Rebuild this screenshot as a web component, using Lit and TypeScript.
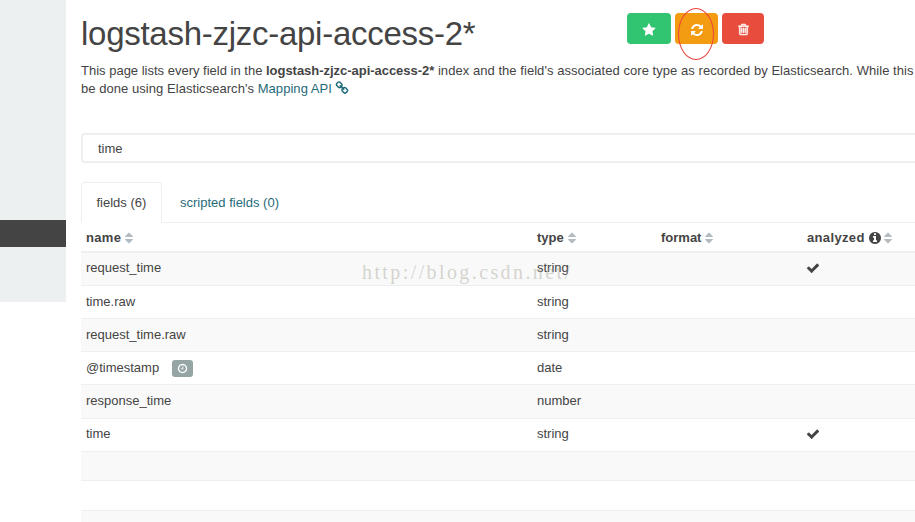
import { LitElement, html, css, svg, nothing } from "lit";
import { customElement, property } from "lit/decorators.js";

const ICONS: Record<string, string> = {
  star: "M1728 647q0 22-26 48l-363 354 86 500q1 7 1 20 0 21-10.5 35.5t-30.5 14.5q-19 0-40-12l-449-236-449 236q-22 12-40 12-21 0-31.5-14.5t-10.5-35.5q0-6 2-20l86-500-364-354q-25-27-25-48 0-37 56-46l502-73 225-455q19-41 49-41t49 41l225 455 502 73q56 9 56 46z",
  refresh: "M1639 1056q0 5-1 7-64 268-268 434.5t-478 166.5q-146 0-282.5-55t-243.5-157l-129 129q-19 19-45 19t-45-19-19-45v-448q0-26 19-45t45-19h448q26 0 45 19t19 45-19 45l-137 137q71 66 161 102t187 36q134 0 250-65t186-179q11-17 53-117 8-23 30-23h192q13 0 22.5 9.5t9.5 22.5zm25-800v448q0 26-19 45t-45 19h-448q-26 0-45-19t-19-45 19-45l138-138q-148-137-349-137-134 0-250 65t-186 179q-11 17-53 117-8 23-30 23h-199q-13 0-22.5-9.5t-9.5-22.5v-7q65-268 270-434.5t480-166.5q146 0 284 55.5t245 156.5l130-129q19-19 45-19t45 19 19 45z",
  trash: "M704 736v576q0 14-9 23t-23 9h-64q-14 0-23-9t-9-23v-576q0-14 9-23t23-9h64q14 0 23 9t9 23zm256 0v576q0 14-9 23t-23 9h-64q-14 0-23-9t-9-23v-576q0-14 9-23t23-9h64q14 0 23 9t9 23zm256 0v576q0 14-9 23t-23 9h-64q-14 0-23-9t-9-23v-576q0-14 9-23t23-9h64q14 0 23 9t9 23zm128 724v-948h-896v948q0 22 7 40.5t14.5 27 10.5 8.5h832q3 0 10.5-8.5t14.5-27 7-40.5zm-672-1076h448l-48-117q-7-9-17-11h-317q-10 2-17 11zm928 32v64q0 14-9 23t-23 9h-96v948q0 83-47 143.5t-113 60.5h-832q-66 0-113-58.5t-47-141.5v-952h-96q-14 0-23-9t-9-23v-64q0-14 9-23t23-9h309l70-167q15-37 54-63t79-26h320q40 0 79 26t54 63l70 167h309q14 0 23 9t9 23z",
  check: "M1671 566q0 40-28 68l-724 724-136 136q-28 28-68 28t-68-28l-136-136-362-362q-28-28-28-68t28-68l136-136q28-28 68-28t68 28l294 295 656-657q28-28 68-28t68 28l136 136q28 28 28 68z",
  info: "M1152 1376v-160q0-14-9-23t-23-9h-96v-512q0-14-9-23t-23-9h-320q-14 0-23 9t-9 23v160q0 14 9 23t23 9h96v320h-96q-14 0-23 9t-9 23v160q0 14 9 23t23 9h448q14 0 23-9t9-23zm-128-896v-160q0-14-9-23t-23-9h-192q-14 0-23 9t-9 23v160q0 14 9 23t23 9h192q14 0 23-9t9-23zm640 416q0 209-103 385.5t-279.5 279.5-385.5 103-385.5-103-279.5-279.5-103-385.5 103-385.5 279.5-279.5 385.5-103 385.5 103 279.5 279.5 103 385.5z",
  clock: "M1024 544v448q0 14-9 23t-23 9h-320q-14 0-23-9t-9-23v-64q0-14 9-23t23-9h224v-352q0-14 9-23t23-9h64q14 0 23 9t9 23zm416 352q0-148-73-273t-198-198-273-73-273 73-198 198-73 273 73 273 198 198 273 73 273-73 198-198 73-273zm224 0q0 209-103 385.5t-279.5 279.5-385.5 103-385.5-103-279.5-279.5-103-385.5 103-385.5 279.5-279.5 385.5-103 385.5 103 279.5 279.5 103 385.5z",
  chain: "M1520 1216q0-40-28-68l-208-208q-28-28-68-28-42 0-72 32 3 3 19 18.5t21.5 21.5 15 19 13 25.5 3.5 27.5q0 40-28 68t-68 28q-15 0-27.5-3.5t-25.5-13-19-15-21.5-21.5-18.5-19q-33 31-33 73 0 40 28 68l206 207q27 27 68 27 40 0 68-26l147-146q28-28 28-67zm-703-705q0-40-28-68l-206-207q-28-28-68-28-39 0-68 27l-147 146q-28 28-28 67 0 40 28 68l208 208q27 27 68 27 42 0 72-31-3-3-19-18.5t-21.5-21.5-15-19-13-25.5-3.5-27.5q0-40 28-68t68-28q15 0 27.5 3.5t25.5 13 19 15 21.5 21.5 18.5 19q33-31 33-73zm895 705q0 120-85 203l-147 146q-83 83-203 83-121 0-204-85l-206-207q-83-83-83-203 0-123 88-209l-88-88q-86 88-208 88-120 0-204-84l-208-208q-84-84-84-204t85-203l147-146q83-83 203-83 121 0 204 85l206 207q83 83 83 203 0 123-88 209l88 88q86-88 208-88 120 0 204 84l208 208q84 84 84 204z",
  sort: "M1408 1088q0 26-19 45l-448 448q-19 19-45 19t-45-19l-448-448q-19-19-19-45t19-45 45-19h896q26 0 45 19t19 45zm0-384q0 26-19 45t-45 19h-896q-26 0-45-19t-19-45 19-45l448-448q19-19 45-19t45 19l448 448q19 19 19 45z",
};

@customElement("fa-icon")
class FaIcon extends LitElement {
  @property() name = "";
  static styles = css`
    :host { display: inline-block; width: 14px; height: 14px; flex: none; }
    svg { display: block; width: 100%; height: 100%; fill: currentColor; overflow: visible; }
    .trash { stroke: currentColor; stroke-width: 70; }
  `;
  render() {
    return html`<svg viewBox="0 0 1792 1792">${svg`<path class=${this.name} d=${ICONS[this.name]}></path>`}</svg>`;
  }
}

interface Field { name: string; type: string; time?: boolean; analyzed?: boolean; size?: string; }

const FIELDS: Field[] = [
  { name: "request_time", type: "string", analyzed: true, size: "first" },
  { name: "time.raw", type: "string" },
  { name: "request_time.raw", type: "string" },
  { name: "@timestamp", type: "date", time: true },
  { name: "response_time", type: "number", size: "tall" },
  { name: "time", type: "string", analyzed: true, size: "last" },
  { name: "", type: "", size: "blank" },
  { name: "", type: "", size: "blank odd" },
  { name: "", type: "", size: "blank" },
];

@customElement("app-root")
class AppRoot extends LitElement {
  static styles = css`
    :host {
      display: flex; position: relative; width: 915px; height: 522px; overflow: hidden;
      background: #fff; color: #444; font: 13px/18px "Liberation Sans", Arial, sans-serif;
    }
    .side { width: 66px; height: 302px; flex: none; background: #ecf0f1; padding-top: 220px; box-sizing: border-box; }
    .side-active { height: 27px; background: #444; }
    .main { flex: none; width: 900px; padding-left: 15px; }
    .head { display: flex; height: 61px; }
    h1 { margin: 15px 0 0; width: 546px; font-size: 33px; line-height: 38px; font-weight: 400; letter-spacing: -0.27px; white-space: nowrap; }
    .actions { display: flex; gap: 4px; margin-top: 13px; }
    .btn { height: 31px; border-radius: 4px; color: #fff; display: flex; align-items: center; justify-content: center; box-sizing: border-box; padding-top: 2px; }
    .btn fa-icon { width: 14px; height: 14px; }
    .btn.bad fa-icon { width: 13px; height: 13px; }
    .ok { width: 44px; background: #31c471; }
    .warn { width: 43px; background: #f39c12; }
    .bad { width: 42px; background: #e74c3c; }
    .ring { position: absolute; left: 678px; top: 8px; width: 36px; height: 52px; box-sizing: border-box; border: 1px solid #f0403a; border-radius: 50%; }
    .intro { margin: 0; padding-top: 1px; height: 71px; white-space: nowrap; }
    .line1 { letter-spacing: 0.05px; }
    .line1 b { letter-spacing: -0.03px; }
    .line1 .lead { letter-spacing: 0; }
    .line2 { letter-spacing: 0.05px; }
    .link { color: #1f6b7a; }
    .link fa-icon { width: 14px; height: 14px; margin-left: -1px; vertical-align: -2px; }
    .filter { height: 30px; box-sizing: border-box; border: 2px solid #ecf0f1; border-radius: 4px; padding: 5px 15px 3px; }
    .tabs { display: flex; margin-top: 19px; height: 41px; box-sizing: border-box; border-bottom: 1px solid #ecf0f1; }
    .tab { height: 41px; box-sizing: border-box; padding: 11px 15px; border: 1px solid transparent; white-space: nowrap; }
    .tab.on { width: 81px; padding-right: 0; padding-left: 14.5px; border-color: #ecf0f1; border-bottom-color: #fff; border-radius: 4px 4px 0 0; }
    .tab.off { color: #1f6b7a; padding-left: 17px; }
    .row { display: grid; grid-template-columns: 451px 124px 146px 1fr; padding: 7px 0 0 5px; height: 33px; box-sizing: border-box; border-top: 1px solid #ecf0f1; }
    .row:nth-child(odd) { background: #f9f9f9; }
    .row.first { border-top-width: 2px; height: 34px; padding-top: 6px; }
    .row.tall { height: 34px; }
    .row.last { padding-top: 6px; }
    .row.blank { height: 29px; }
    .row.blank.odd { height: 30px; }
    .thead { display: grid; grid-template-columns: 451px 124px 146px 1fr; padding: 6px 0 0 5px; height: 28px; box-sizing: border-box; font-weight: 700; }
    .th, .td { display: flex; align-items: center; height: 18px; white-space: nowrap; }
    .th fa-icon { width: 14px; height: 14px; margin-left: 3px; }
    .wide { letter-spacing: 0.35px; }
    .th .sort { margin: -1px 0 0 1px; color: #b4bcc2; }
    .th fa-icon + .sort { margin-left: -1px; }
    .td fa-icon { margin-left: -1px; }
    .clock { display: flex; align-items: center; justify-content: center; width: 21px; height: 17px; margin: 1px 0 0 13px; border-radius: 3px; background: #95a5a6; color: #fff; }
    .clock fa-icon { width: 11px; height: 11px; margin: 0; }
    .mark { position: absolute; left: 362px; top: 260px; font: 20px/24px "Liberation Serif", serif; letter-spacing: 2.4px; color: rgba(165, 165, 150, 0.45); white-space: nowrap; }
  `;

  head(label: string, wide = false, info = false) {
    return html`<div class="th"><span class=${wide ? "wide" : ""}>${label}</span>${info ? html`<fa-icon name="info"></fa-icon>` : nothing}<fa-icon class="sort" name="sort"></fa-icon></div>`;
  }

  render() {
    return html`
      <div class="side"><div class="side-active"></div></div>
      <div class="main">
        <div class="head">
          <h1>logstash-zjzc-api-access-2*</h1>
          <div class="actions">
            <div class="btn ok"><fa-icon name="star"></fa-icon></div>
            <div class="btn warn"><fa-icon name="refresh"></fa-icon></div>
            <div class="btn bad"><fa-icon name="trash"></fa-icon></div>
          </div>
        </div>
        <p class="intro">
          <span class="line1"><span class="lead">This page lists every field in the </span><b>logstash-zjzc-api-access-2*</b> index and the field's associated core type as recorded by Elasticsearch. While this</span><br />
          <span class="line2">be done using Elasticsearch's <span class="link">Mapping API <fa-icon name="chain"></fa-icon></span></span>
        </p>
        <div class="filter">time</div>
        <div class="tabs">
          <div class="tab on">fields (6)</div>
          <div class="tab off">scripted fields (0)</div>
        </div>
        <div class="thead">${this.head("name", true)}${this.head("type")}${this.head("format")}${this.head("analyzed", true, true)}</div>
        <div class="tbody">
          ${FIELDS.map((f) => html`
            <div class="row ${f.size ?? ""}">
              <div class="td">${f.name}${f.time ? html`<span class="clock"><fa-icon name="clock"></fa-icon></span>` : nothing}</div>
              <div class="td">${f.type}</div>
              <div class="td"></div>
              <div class="td">${f.analyzed ? html`<fa-icon name="check"></fa-icon>` : nothing}</div>
            </div>`)}
        </div>
      </div>
      <div class="ring"></div>
      <div class="mark">http://blog.csdn.net/</div>
    `;
  }
}
